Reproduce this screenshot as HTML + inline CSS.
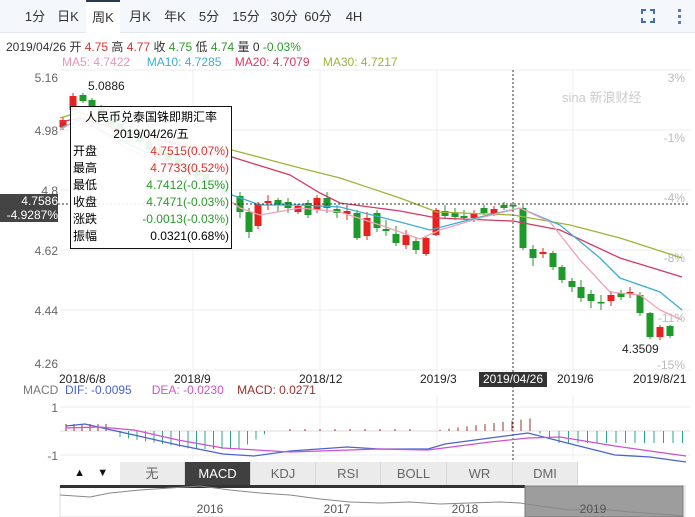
<!DOCTYPE html>
<html><head><meta charset="utf-8"><style>
body{margin:0;width:695px;height:517px;overflow:hidden;background:#fff;font-family:"Liberation Sans","Noto Sans CJK SC",sans-serif;position:relative}
.a{position:absolute;white-space:nowrap}
.tabs{position:absolute;left:0;top:0;width:695px;height:32px;background:#f4f7fb;border-bottom:1px solid #e3e7ee}
.tab{position:absolute;top:0;height:32px;line-height:33px;font-size:13px;color:#333;text-align:center;white-space:nowrap}
.btn{position:absolute;top:462px;height:23px;line-height:23px;font-size:13px;color:#666;text-align:center;background:#ebebeb;border-right:1px solid #d8d8d8}
.r{color:#e0302c}.g{color:#2a9a2a}
</style></head><body>
<div class="tabs">
<div class="tab" style="left:22px;width:26px">1分</div>
<div class="tab" style="left:54px;width:28px">日K</div>
<div class="tab" style="left:86px;width:34px;background:#fff;border-top:2px solid #2b3a55;height:31px;line-height:31px">周K</div>
<div class="tab" style="left:126px;width:28px">月K</div>
<div class="tab" style="left:161px;width:28px">年K</div>
<div class="tab" style="left:196px;width:26px">5分</div>
<div class="tab" style="left:230px;width:32px">15分</div>
<div class="tab" style="left:268px;width:32px">30分</div>
<div class="tab" style="left:302px;width:32px">60分</div>
<div class="tab" style="left:342px;width:24px">4H</div>
<svg class="a" style="left:640px;top:8px" width="50" height="16"><g stroke="#3f6fb0" stroke-width="2" fill="none"><path d="M2 6V2H6M10 2H14V6M2 10V14H6M10 14H14V10"/></g><g fill="#5a7ab0"><rect x="38" y="1" width="3" height="3"/><rect x="38" y="7" width="3" height="3"/><rect x="38" y="13" width="3" height="3"/></g></svg>
</div>
<div class="a" style="left:6px;top:38px;font-size:12px;color:#333">2019/04/26 开 <span class="r">4.75</span> 高 <span class="r">4.77</span> 收 <span class="g">4.75</span> 低 <span class="g">4.74</span> 量 0 <span class="g">-0.03%</span></div>
<div class="a" style="left:62px;top:55px;font-size:12px"><span style="color:#e897b3">MA5: 4.7422</span>&nbsp;&nbsp;&nbsp;&nbsp;&nbsp;<span style="color:#3aafcf">MA10: 4.7285</span>&nbsp;&nbsp;&nbsp;&nbsp;<span style="color:#d23a64">MA20: 4.7079</span>&nbsp;&nbsp;&nbsp;&nbsp;<span style="color:#9bb53a">MA30: 4.7217</span></div>
<svg id="c" class="a" style="left:0;top:0" width="695" height="517"></svg>
<div class="a" style="left:0;top:194px;width:58px;height:28px;background:#444;color:#fff;font-size:12px;text-align:right;line-height:14px">4.7586<br>-4.9287%</div>
<div class="a" style="left:70px;top:106px;width:160px;height:141px;border:1px solid #111;background:rgba(255,255,255,.9);font-size:12px;line-height:17px">
<div style="text-align:center;margin-top:2px">人民币兑泰国铢即期汇率</div>
<div style="text-align:center">2019/04/26/五</div>
<div style="padding:0 2px"><span>开盘</span><span class="r" style="float:right">4.7515(0.07%)</span></div>
<div style="padding:0 2px"><span>最高</span><span class="r" style="float:right">4.7733(0.52%)</span></div>
<div style="padding:0 2px"><span>最低</span><span class="g" style="float:right">4.7412(-0.15%)</span></div>
<div style="padding:0 2px"><span>收盘</span><span class="g" style="float:right">4.7471(-0.03%)</span></div>
<div style="padding:0 2px"><span>涨跌</span><span class="g" style="float:right">-0.0013(-0.03%)</span></div>
<div style="padding:0 2px"><span>振幅</span><span style="float:right">0.0321(0.68%)</span></div>
</div>
<div class="a" style="left:479px;top:372px;width:68px;height:15px;background:#333;color:#fff;font-size:12px;line-height:15px;text-align:center">2019/04/26</div>
<div class="a" style="left:59px;top:372px;font-size:12px;color:#222">2018/6/8</div>
<div class="a" style="left:174px;top:372px;font-size:12px;color:#222">2018/9</div>
<div class="a" style="left:299px;top:372px;font-size:12px;color:#222">2018/12</div>
<div class="a" style="left:420px;top:372px;font-size:12px;color:#222">2019/3</div>
<div class="a" style="left:557px;top:372px;font-size:12px;color:#222">2019/6</div>
<div class="a" style="left:633px;top:372px;font-size:12px;color:#222">2019/8/21</div>
<div class="a" style="left:23px;top:383px;font-size:12px"><span style="color:#777">MACD</span>&nbsp; <span style="color:#4b63d0">DIF: -0.0095</span>&nbsp;&nbsp;&nbsp;&nbsp;&nbsp;&nbsp;<span style="color:#d050d0">DEA: -0.0230</span>&nbsp;&nbsp;&nbsp;&nbsp;<span style="color:#a0302a">MACD: 0.0271</span></div>
<div class="a" style="left:65px;top:462px;width:55px;height:23px;line-height:23px;font-size:11px;color:#111">&nbsp;&nbsp;&nbsp;▲&nbsp;&nbsp;&nbsp;&nbsp;▼</div>
<div class="btn" style="left:120px;width:64px">无</div>
<div class="btn" style="left:185px;width:65px;background:#404040;color:#fff">MACD</div>
<div class="btn" style="left:251px;width:64px">KDJ</div>
<div class="btn" style="left:316px;width:64px">RSI</div>
<div class="btn" style="left:381px;width:65px">BOLL</div>
<div class="btn" style="left:447px;width:65px">WR</div>
<div class="btn" style="left:513px;width:64px">DMI</div>
<script>
var s='';
function L(x1,y1,x2,y2,c,w,d){s+='<line x1="'+x1+'" y1="'+y1+'" x2="'+x2+'" y2="'+y2+'" stroke="'+c+'" stroke-width="'+(w||1)+'"'+(d?' stroke-dasharray="'+d+'"':'')+'/>';}
function T(x,y,t,c,sz,a){s+='<text x="'+x+'" y="'+y+'" fill="'+c+'" font-size="'+(sz||12)+'" text-anchor="'+(a||'start')+'">'+t+'</text>';}
function P(pts,c,w){s+='<polyline fill="none" stroke="'+c+'" stroke-width="'+(w||1.3)+'" points="'+pts+'"/>';}
[70,130,190,250,310,370].forEach(function(y){L(60,y,690,y,'#eee');});
[193,320,437,573].forEach(function(x){L(x,70,x,370,'#eee');L(x,395,x,460,'#eee');});
L(60,407,690,407,'#eee');L(60,455,690,455,'#eee');
[['5.16',82],['4.98',135],['4.8',195],['4.62',255],['4.44',315],['4.26',368]].forEach(function(a){T(58,a[1],a[0],'#666',12,'end');});
[['3%',82],['-1%',142],['-4%',202],['-8%',262],['-11%',322],['-15%',369]].forEach(function(a){T(685,a[1],a[0],'#bbb',12,'end');});
T(562,102,'sina 新浪财经','#ccc',13,'start');
var C=[[63,127,120,117,130],[73,110,96,93,112],[83,95,101,93,103],[92,100,108,98,110],[101,108,118,105,122],[111,118,126,115,130],[120,124,132,120,136],[130,130,138,126,142],[140,136,142,132,146],[149,142,150,138,154],[159,148,156,144,160],[168,152,160,150,164],[178,158,166,154,170],[187,164,172,160,176],[197,170,176,166,180],[206,174,182,170,186],[216,180,188,176,192],[225,186,194,182,198],[240,196,212,192,218],[249,212,232,208,238],[258,226,204,202,229],[268,203,201,195,210],[278,200,205,198,212],[288,202,208,198,213],[298,212,206,204,214],[308,203,215,200,218],[317,210,198,195,213],[327,198,208,192,213],[337,209,213,205,218],[347,214,211,205,220],[357,213,238,210,240],[367,236,218,212,240],[377,213,228,210,232],[386,229,231,220,236],[396,234,243,226,246],[406,245,235,230,249],[416,241,250,238,254],[426,254,238,236,256],[436,235,210,208,236],[445,211,216,205,219],[455,213,217,208,220],[464,216,218,210,220],[474,218,213,210,222],[484,208,213,205,215],[494,214,209,206,216],[504,205,208,202,210],[513,205,206,202,210],[523,208,248,205,250],[533,249,258,245,266],[543,254,252,248,258],[553,253,267,251,270],[562,267,280,265,283],[572,281,287,278,292],[581,287,298,280,302],[591,294,301,290,308],[601,302,303,295,310],[611,301,295,291,306],[621,293,297,290,300],[630,293,292,287,298],[640,295,313,292,316],[650,313,337,312,339],[660,337,327,325,340],[670,326,336,325,338]];
C.forEach(function(c){var up=c[2]<c[1];var col=up?'#e8211c':'#1e9a2a';L(c[0],c[3],c[0],c[4],col);var t=Math.min(c[1],c[2]),h=Math.max(Math.abs(c[2]-c[1]),1.5);s+='<rect x="'+(c[0]-3.5)+'" y="'+t+'" width="7" height="'+h+'" fill="'+col+'"/>';});
P('60,118 80,112 110,125 160,140 232,150 300,168 340,178 400,198 437,212 513,215 570,225 620,238 682,258','#9bb53a');
P('60,122 80,118 120,130 180,145 232,157 290,175 320,193 340,203 400,211 437,218 513,221 560,230 620,258 682,277','#d23a64');
P('60,128 80,120 120,140 180,168 232,195 260,205 300,205 340,207 400,222 430,230 480,217 520,208 560,225 600,258 620,278 660,292 682,310','#3aafcf');
P('60,130 80,118 130,150 200,180 240,208 260,215 300,208 340,212 380,225 420,239 440,230 480,218 520,208 550,222 580,260 610,292 640,295 660,310 682,320','#f0a0b8');
T(88,90,'5.0886','#222',12);T(622,353,'4.3509','#222',12);
L(513,70,513,470,'#333',1,'2,2');L(58,204,690,204,'#333',1,'2,2');
T(58,412,'1','#666',12,'end');T(58,460,'-1','#666',12,'end');
L(60,431,690,431,'#ddd');
for(var x=66;x<=110;x+=8)L(x,431,x,424,'#a0302a');
for(var x=120;x<=270;x+=8.5)L(x,431,x,431+Math.min(18,6+(x-120)/6)*(x>240?(270-x)/30:1),'#2aa88a');
for(var x=290;x<=420;x+=15)L(x,431,x,429,'#a0302a');
for(var x=440;x<=530;x+=9)L(x,431,x,431-(x-430)/8,'#a0302a');
for(var x=540;x<=690;x+=9.5)L(x,431,x,431+Math.min(12,(x-535)/2),'#2aa88a');
P('66,426 85,424 134,435 178,445 223,454 254,456 290,451 347,447 379,449 428,449 445,444 490,438 528,433 575,445 615,455 650,457 686,462','#4b63d0');
P('66,428 100,427 134,430 178,440 223,448 290,452 379,449 428,450 490,442 528,438 560,437 615,446 650,451 686,456','#d050d0');
s+='<rect x="60" y="486" width="625" height="31" fill="#fff" stroke="#ddd"/>';
s+='<rect x="60" y="485" width="465" height="3" fill="#333"/>';
s+='<rect x="525" y="486" width="158" height="31" fill="#9d9d9d" stroke="#777"/>';
P('60,495 90,497 110,493 140,490 170,488 200,486 230,490 260,493 290,495 320,499 350,502 380,503 410,502 440,504 470,503 500,502 520,503 540,506 570,510 600,509 630,512 660,514 683,516','#888',1);
T(210,513,'2016','#555',12,'middle');T(337,513,'2017','#555',12,'middle');T(465,513,'2018','#555',12,'middle');T(593,513,'2019','#555',12,'middle');
document.getElementById('c').innerHTML=s;
</script>
</body></html>
